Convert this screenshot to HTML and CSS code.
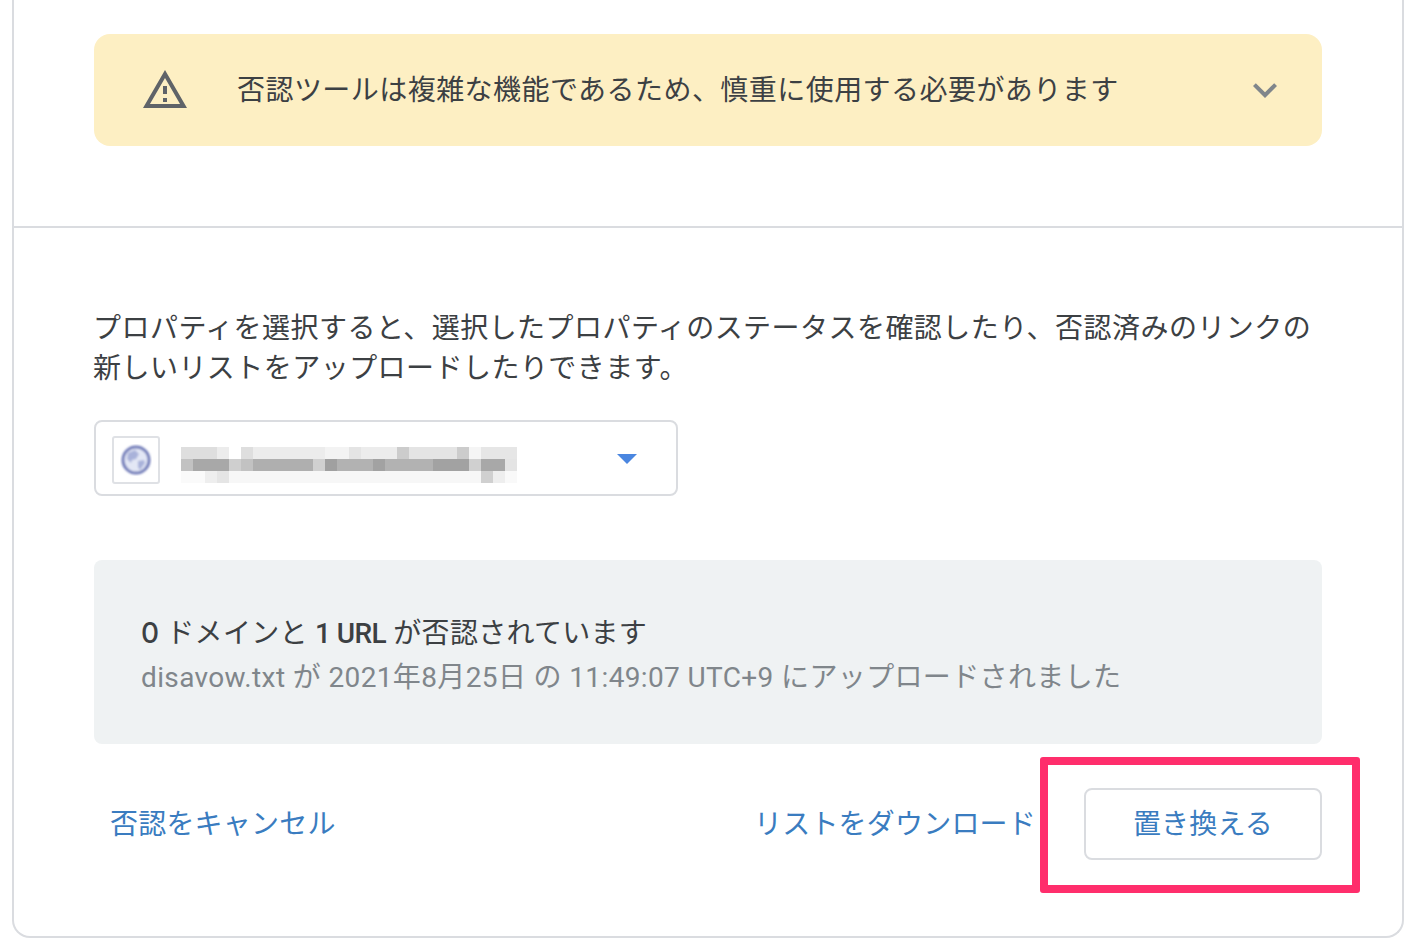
FILE: index.html
```html
<!DOCTYPE html>
<html lang="ja">
<head>
<meta charset="utf-8">
<title>否認ツール</title>
<link rel="stylesheet" href="styles.css">
</head>
<body>
<main class="card">
  <section class="top">
    <div class="banner">
      <svg class="warn" viewBox="0 0 24 24" width="48" height="48"><path d="M1 21h22L12 2 1 21zm3.47-2L12 5.99 19.53 19H4.47zM11 16h2v2h-2zm0-6h2v4h-2z"/></svg>
      <span class="banner-text">否認ツールは複雑な機能であるため、慎重に使用する必要があります</span>
      <svg class="chev" viewBox="0 0 24 24" width="48" height="48"><path d="M16.59 8.59 12 13.17 7.41 8.59 6 10l6 6 6-6z"/></svg>
    </div>
  </section>
  <section class="body">
    <p class="intro">プロパティを選択すると、選択したプロパティのステータスを確認したり、否認済みのリンクの新しいリストをアップロードしたりできます。</p>
    <div class="select">
      <span class="favicon">
        <svg class="globe" viewBox="0 0 32 32" width="32" height="32"><defs><filter id="soft"><feGaussianBlur stdDeviation="0.8"/></filter></defs><g filter="url(#soft)"><circle cx="16" cy="16" r="13" fill="#e3e7f5" stroke="#6f7ab8" stroke-width="3"/><path d="M8 9l7-3 4 4-3 5-4 1-1 3-4-4zM18 17l6-1 1 3-5 7-2-3z" fill="#a9b2da"/></g></svg>
      </span>
      <svg class="mosaic" width="336" height="36" viewBox="0 0 336 36">
        <g fill="#dedede"><rect x="0" y="0" width="36" height="12"/><rect x="60" y="0" width="12" height="12"/><rect x="216" y="0" width="12" height="12" fill="#ccc"/><rect x="276" y="0" width="12" height="12" fill="#ccc"/></g>
        <g fill="#ececec"><rect x="36" y="0" width="12" height="12"/><rect x="72" y="0" width="72" height="12"/><rect x="144" y="0" width="24" height="12" fill="#f3f3f3"/><rect x="168" y="0" width="12" height="12" fill="#e4e4e4"/><rect x="180" y="0" width="36" height="12"/><rect x="228" y="0" width="48" height="12" fill="#e4e4e4"/><rect x="288" y="0" width="12" height="12" fill="#f5f5f5"/><rect x="300" y="0" width="36" height="12" fill="#e6e6e6"/></g>
        <rect x="0" y="12" width="12" height="12" fill="#c2c2c2"/><rect x="12" y="12" width="36" height="12" fill="#a8a8a8"/><rect x="48" y="12" width="12" height="12" fill="#cfcfcf"/><rect x="60" y="12" width="12" height="12" fill="#c2c2c2"/><rect x="72" y="12" width="60" height="12" fill="#afafaf"/><rect x="132" y="12" width="12" height="12" fill="#d0d0d0"/><rect x="144" y="12" width="12" height="12" fill="#a0a0a0"/><rect x="156" y="12" width="36" height="12" fill="#b2b2b2"/><rect x="192" y="12" width="12" height="12" fill="#a2a2a2"/><rect x="204" y="12" width="48" height="12" fill="#b2b2b2"/><rect x="252" y="12" width="36" height="12" fill="#a2a2a2"/><rect x="288" y="12" width="12" height="12" fill="#d0d0d0"/><rect x="300" y="12" width="24" height="12" fill="#a8a8a8"/><rect x="324" y="12" width="12" height="12" fill="#e4e4e4"/>
        <rect x="0" y="24" width="24" height="12" fill="#fafafa"/><rect x="24" y="24" width="12" height="12" fill="#eee"/><rect x="36" y="24" width="12" height="12" fill="#e5e5e5"/><rect x="48" y="24" width="252" height="12" fill="#f7f7f7"/><rect x="300" y="24" width="12" height="12" fill="#d0d0d0"/><rect x="312" y="24" width="12" height="12" fill="#eee"/><rect x="324" y="24" width="12" height="12" fill="#f9f9f9"/>
      </svg>
      <span class="caret"></span>
    </div>
    <div class="status">
      <div class="status-main"><b class="zero">0</b> ドメインと <b>1 URL</b> が否認されています</div>
      <div class="status-sub">disavow.txt が 2021年8月25日 の 11:49:07 UTC+9 にアップロードされました</div>
    </div>
    <div class="actions">
      <a class="link cancel">否認をキャンセル</a>
      <a class="link download">リストをダウンロード</a>
      <a class="button">置き換える<span class="highlight"></span></a>
    </div>
  </section>
</main>
</body>
</html>
```

FILE: styles.css
```css
* { box-sizing: border-box; }
html, body { margin: 0; height: 100%; background: #fff; overflow: hidden; }
body {
  padding: 0 14px 0 12px;
  font-family: Roboto, "Noto Sans CJK JP", sans-serif;
  font-size: 28px;
  color: #3c4043;
}
.card {
  height: 938px;
  border: 2px solid #dadce0;
  border-top: 0;
  border-radius: 0 0 18px 18px;
}
.top {
  padding: 34px 80px 80px;
  border-bottom: 2px solid #dadce0;
}
.banner {
  display: flex;
  align-items: center;
  height: 112px;
  padding: 0 33px 0 47px;
  background: #fdefc3;
  border-radius: 16px;
}
.warn { fill: #5f6368; flex: none; }
.chev { fill: #80868b; flex: none; margin-left: auto; }
.banner-text { margin-left: 48px; padding-bottom: 4px; letter-spacing: 0.45px; }
.body { padding: 81px 80px 0; }
.intro { margin: 0 0 0 -1px; line-height: 40px; letter-spacing: 0.46px; }
.select {
  display: flex;
  align-items: center;
  width: 584px;
  height: 76px;
  margin-top: 31px;
  padding: 0 39px 0 16px;
  border: 2px solid #dadce0;
  border-radius: 8px;
}
.favicon {
  display: flex;
  align-items: center;
  justify-content: center;
  width: 48px;
  height: 48px;
  flex: none;
  margin-top: 4px;
  border: 2px solid #dfe1e5;
  border-radius: 3px;
}
.mosaic { flex: none; margin: 14px 0 0 21px; }
.caret {
  margin: 2px 0 0 auto;
  width: 0;
  height: 0;
  border-left: 10px solid transparent;
  border-right: 10px solid transparent;
  border-top: 10px solid #4a86e0;
}
.status {
  height: 184px;
  margin-top: 64px;
  padding: 51px 47px 0;
  background: #eff2f3;
  border-radius: 8px;
  line-height: 44px;
}
.status b { font-weight: 500; letter-spacing: -0.6px; }
.status .zero { font-family: Inter, sans-serif; letter-spacing: 0; }
.status-main { letter-spacing: 0.3px; }
.status-sub { color: #80868b; letter-spacing: 0.37px; }
.actions {
  display: flex;
  align-items: center;
  margin-top: 44px;
  color: #3a7cc0;
}
.link { padding-bottom: 4px; letter-spacing: 0.2px; }
.cancel { margin-left: 16px; }
.download { margin-left: auto; }
.button {
  position: relative;
  display: flex;
  align-items: center;
  justify-content: center;
  width: 238px;
  height: 72px;
  margin-left: 48px;
  padding-bottom: 4px;
  border: 2px solid #dadce0;
  border-radius: 8px;
  letter-spacing: 0.2px;
}
.highlight {
  position: absolute;
  left: -46px;
  top: -33px;
  width: 320px;
  height: 136px;
  border: 8px solid #ff2e6c;
  border-radius: 3px;
}
```
